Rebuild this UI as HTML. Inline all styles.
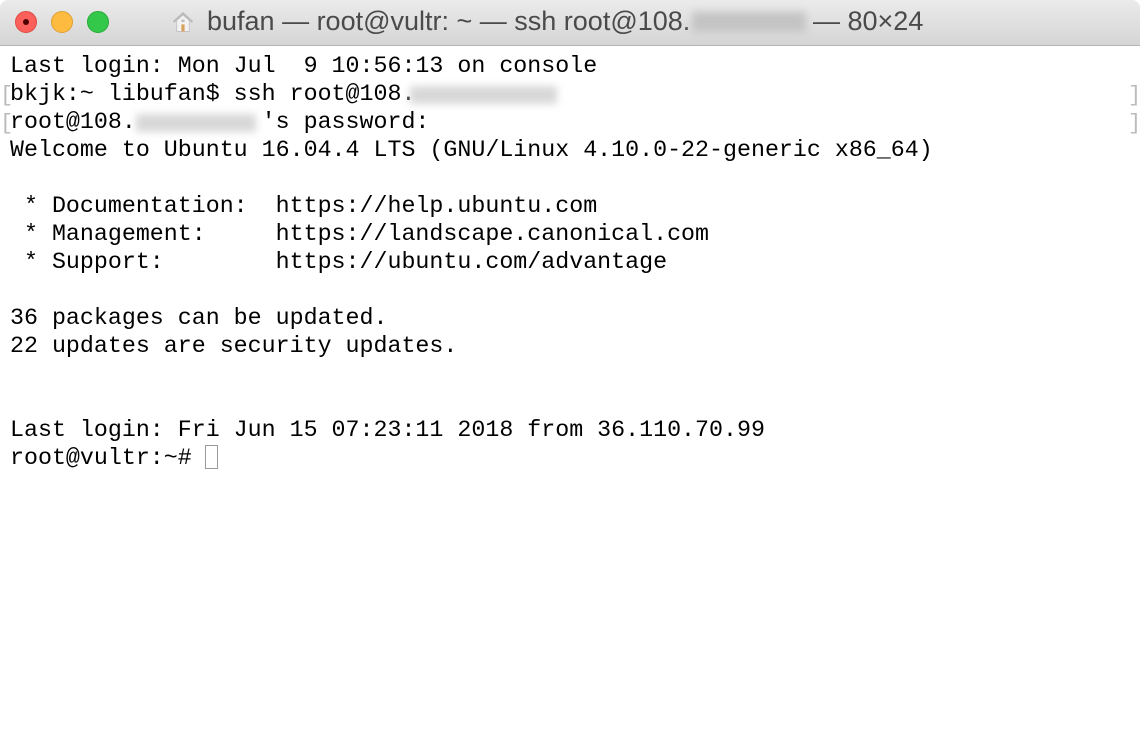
<!DOCTYPE html>
<html><head><style>
html,body{margin:0;padding:0;width:1140px;height:732px;overflow:hidden;background:#fff}
.tb{position:absolute;left:0;top:0;width:1140px;height:45px;background:linear-gradient(#ebebeb,#d5d5d5);border-bottom:1px solid #b5b5b5;border-radius:8px 8px 0 0}
.dot{position:absolute;top:11px;width:22px;height:22px;border-radius:50%;box-sizing:border-box}
.title{position:absolute;top:6px;font:27px "Liberation Sans",sans-serif;color:#4a4a4a;white-space:pre}
.term{position:absolute;left:10px;top:52px;font:23.3px/28px "Liberation Mono",monospace;color:#000;white-space:pre}
.blur{position:absolute;background:#d8d8d8;filter:blur(4px)}
.br{position:absolute;font:22px "Liberation Mono",monospace;color:#bbb}
</style></head><body>
<div class="tb">
<div class="dot" style="left:15px;background:#fc605b;border:1px solid #de4a44"><div style="position:absolute;left:7px;top:7px;width:6px;height:6px;border-radius:50%;background:#4d0000"></div></div>
<div class="dot" style="left:51px;background:#fdbc40;border:1px solid #de9f34"></div>
<div class="dot" style="left:87px;background:#34c84a;border:1px solid #27aa35"></div>
<svg style="position:absolute;left:172px;top:10px" width="22" height="24" viewBox="0 0 28 26"><path d="M2 13 L14 2 L26 13" fill="none" stroke="#b9b9b9" stroke-width="2.5"/><path d="M6 11 V25 H22 V11 L14 4Z" fill="#f2f2f2" stroke="#c0c0c0"/><rect x="12" y="16" width="4" height="9" fill="#d9a05c"/><rect x="12" y="10" width="4" height="3" fill="#bbb"/></svg>
<div class="title" style="left:207px">bufan — root@vultr: ~ — ssh root@108.</div>
<div class="blur" style="left:692px;top:12px;width:114px;height:20px;background:#c4c4c4"></div>
<div class="title" style="left:813px">— 80×24</div>
</div>
<div class="term">Last login: Mon Jul  9 10:56:13 on console
bkjk:~ libufan$ ssh root@108.
root@108.         's password:
Welcome to Ubuntu 16.04.4 LTS (GNU/Linux 4.10.0-22-generic x86_64)

 * Documentation:  https://help.ubuntu.com
 * Management:     https://landscape.canonical.com
 * Support:        https://ubuntu.com/advantage

36 packages can be updated.
22 updates are security updates.


Last login: Fri Jun 15 07:23:11 2018 from 36.110.70.99
root@vultr:~# </div>
<div class="blur" style="left:410px;top:86px;width:147px;height:18px"></div>
<div class="blur" style="left:136px;top:114px;width:120px;height:18px"></div>
<div class="br" style="left:0px;top:83px">[</div>
<div class="br" style="left:0px;top:111px">[</div>
<div class="br" style="left:1128px;top:83px">]</div>
<div class="br" style="left:1128px;top:111px">]</div>
<div style="position:absolute;left:205px;top:445px;width:13px;height:24px;border:1px solid #999;box-sizing:border-box"></div>
</body></html>
